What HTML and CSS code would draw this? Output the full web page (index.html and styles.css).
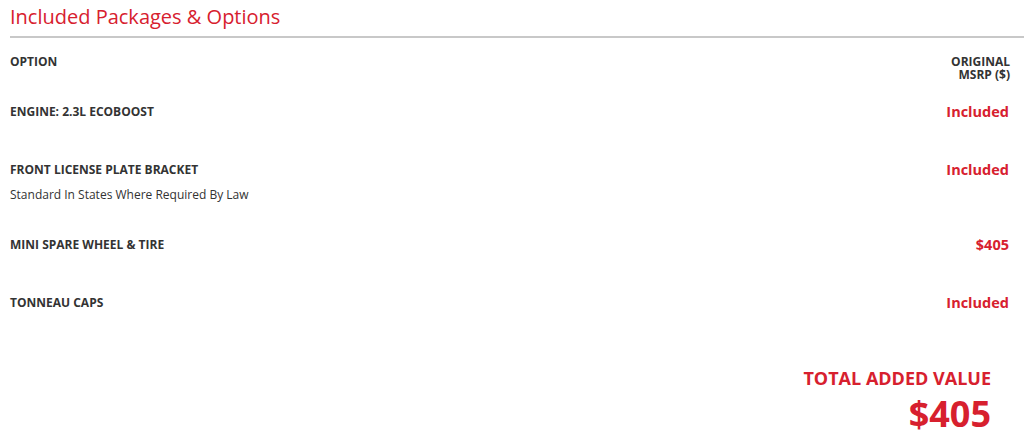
FILE: index.html
```html
<!DOCTYPE html>
<html lang="en">
<head>
  <meta charset="UTF-8" />
  <meta name="viewport" content="width=device-width, initial-scale=1" />
  <title>Included Packages &amp; Options</title>
  <link rel="stylesheet" href="styles.css">
</head>
<body>

  <section class="options">
    <h2 class="options-title">Included Packages &amp; Options</h2>

    <div class="options-head">
      <span>Option</span>
      <span class="price-head">Original<br>MSRP ($)</span>
    </div>

    <div class="option-row">
      <div class="option-info">
        <div class="option-name">Engine: 2.3L EcoBoost</div>
      </div>
      <div class="option-price">Included</div>
    </div>

    <div class="option-row">
      <div class="option-info">
        <div class="option-name">Front License Plate Bracket</div>
        <div class="option-desc">Standard In States Where Required By Law</div>
      </div>
      <div class="option-price">Included</div>
    </div>

    <div class="option-row">
      <div class="option-info">
        <div class="option-name">Mini Spare Wheel &amp; Tire</div>
      </div>
      <div class="option-price">$405</div>
    </div>

    <div class="option-row">
      <div class="option-info">
        <div class="option-name">Tonneau Caps</div>
      </div>
      <div class="option-price">Included</div>
    </div>

    <div class="options-total">
      <div class="total-label">Total Added Value</div>
      <div class="total-value">$405</div>
    </div>
  </section>

</body>
</html>
```

FILE: styles.css
```css
:root {
  --red: #d7202e;
  --text: #333333;
  --rule: #c8c8c8;
  --font-main: 'Open Sans', Arial, sans-serif;
}

body {
  margin: 0;
  font-family: var(--font-main);
  color: var(--text);
  background: #ffffff;
}

.options {
  padding-left: 10px;
}

.options-title {
  margin: 0;
  padding: 4px 0 6px;
  font-size: 20px;
  line-height: 26px;
  font-weight: 400;
  color: var(--red);
  border-bottom: 2px solid var(--rule);
}

.options-head {
  display: flex;
  justify-content: space-between;
  padding: 17px 14px 0 0;
  font-size: 12px;
  line-height: 13px;
  font-weight: 700;
  text-transform: uppercase;
}

.price-head {
  text-align: right;
}

.option-row {
  display: flex;
  justify-content: space-between;
  padding: 21px 15px 9px 0;
}

.option-info {
  min-height: 28px;
}

.option-name {
  font-size: 12px;
  line-height: 20px;
  font-weight: 700;
  text-transform: uppercase;
}

.option-desc {
  margin-top: 5px;
  font-size: 12px;
  line-height: 20px;
}

.option-price {
  font-size: 14.5px;
  line-height: 20px;
  font-weight: 700;
  color: var(--red);
}

.options-total {
  display: flex;
  flex-direction: column;
  align-items: flex-end;
  padding: 35px 33px 0 0;
  color: var(--red);
  font-weight: 700;
}

.total-label {
  font-size: 18px;
  line-height: 26px;
  text-transform: uppercase;
}

.total-value {
  font-size: 36px;
  line-height: 46px;
}
```
